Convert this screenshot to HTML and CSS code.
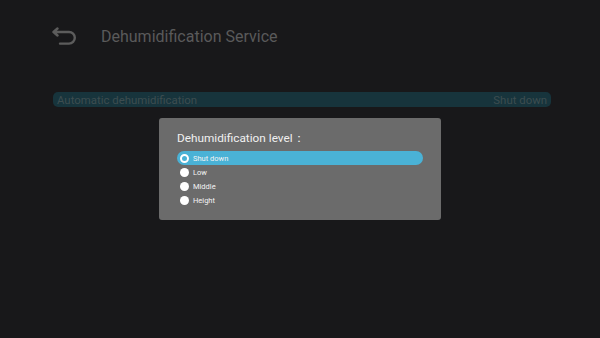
FILE: index.html
```html
<!DOCTYPE html>
<html lang="en">
    <head>
        <meta charset="UTF-8" />
        <meta name="viewport" content="width=device-width, initial-scale=1.0" />
        <title>Dehumidification Service</title>
        <link rel="stylesheet" href="styles.css">
    </head>
    <body>
        <!-- 상단 헤더 -->
        <header class="head">
            <svg class="back" width="24" height="19" viewBox="0 0 24 19">
                <path d="M5.5 1.5 L1.5 5 L5.5 8.5 M1.5 5 H17 A5.8 5.8 0 0 1 17 16.6 H8" fill="none" stroke="#5c5c5c" stroke-width="2.4" stroke-linecap="round" stroke-linejoin="round"/>
            </svg>
            <h1>Dehumidification Service</h1>
        </header>

        <!-- 설정 목록 -->
        <ul class="list">
            <li class="row">
                <span>Automatic dehumidification</span>
                <span>Shut down</span>
            </li>
        </ul>

        <!-- 팝업 -->
        <div class="dialog">
            <h2>Dehumidification level：</h2>
            <ol class="opts">
                <li class="opt on"><i></i>Shut down</li>
                <li class="opt"><i></i>Low</li>
                <li class="opt"><i></i>Middle</li>
                <li class="opt"><i></i>Height</li>
            </ol>
        </div>
    </body>
</html>
```

FILE: styles.css
```css
html,
body {
    margin: 0;
    padding: 0;
    height: 100%;
}
body {
    background: #18181a;
    font-family: Roboto, "Noto Sans", sans-serif;
    position: relative;
    overflow: hidden;
}

ul,
ol {
    margin: 0;
    padding: 0;
    list-style: none;
}

/* 헤더 */
.head {
    display: flex;
    align-items: center;
    padding: 26px 0 0 52px;
    height: 20px;
}
.back {
    display: block;
}
.head h1 {
    margin: 0 0 0 25px;
    font-size: 16px;
    font-weight: normal;
    color: #5a5a5a;
}

/* 목록 */
.list {
    margin: 46px 49px 0 53px;
}
.row {
    display: flex;
    justify-content: space-between;
    align-items: center;
    height: 15px;
    padding: 0 4px;
    background: #17343c;
    border-radius: 5px;
    font-size: 11.4px;
    color: #3d4d50;
}

/* 팝업 */
.dialog {
    position: absolute;
    left: 159px;
    top: 118px;
    width: 282px;
    height: 102px;
    box-sizing: border-box;
    padding: 12px 18px 0 18px;
    background: #6b6b6b;
    border-radius: 3px;
}
.dialog h2 {
    margin: 0 0 5px 0;
    font-size: 11.8px;
    font-weight: normal;
    color: #f0f0f0;
    line-height: 16px;
}
.opts {
    width: 246px;
}
.opt {
    display: flex;
    align-items: center;
    height: 14px;
    border-radius: 7px;
    font-size: 7.5px;
    color: #f4f4f4;
    padding-left: 3px;
}
.opt i {
    width: 9px;
    height: 9px;
    border-radius: 50%;
    background: #fff;
    margin-right: 4px;
    box-sizing: border-box;
}
.opt.on {
    background: #4ab2d6;
}
.opt.on i {
    background: #4ab2d6;
    border: 2px solid #fff;
}
```
